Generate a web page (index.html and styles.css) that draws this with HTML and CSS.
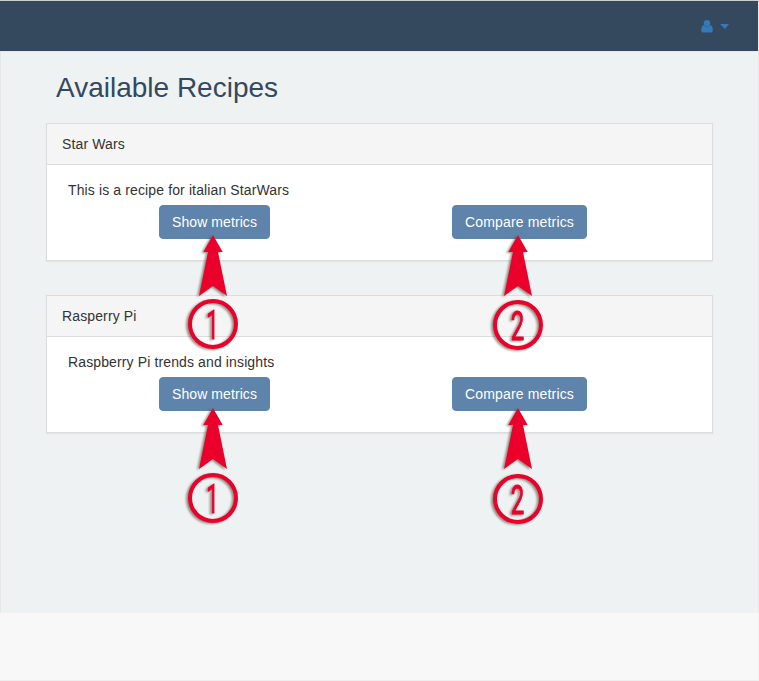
FILE: index.html
```html
<!DOCTYPE html>
<html lang="en">
<head>
<meta charset="utf-8">
<title>Available Recipes</title>
<link rel="stylesheet" href="styles.css">
</head>
<body>
<header class="navbar">
  <a class="user-menu">
    <svg width="12" height="13" viewBox="0 0 12 13"><circle cx="6" cy="3.300" r="3.200"/><path d="M2.600 5.100C.8 5.700.2 8 .2 10.200.2 11.700 1.100 12.500 2.500 12.500h7c1.400 0 2.300-.8 2.300-2.300 0-2.200-.6-4.500-2.400-5.100C7.600 7.200 4.400 7.200 2.600 5.100z"/></svg>
    <span class="caret"></span>
  </a>
</header>
<main class="content">
  <h1 class="title">Available Recipes</h1>
  <section class="panel">
    <div class="panel-heading">Star Wars</div>
    <div class="panel-body">
      <p class="description">This is a recipe for italian StarWars</p>
      <div class="actions">
        <div class="action"><button class="btn btn-show">Show metrics</button></div>
        <div class="action"><button class="btn btn-compare">Compare metrics</button></div>
      </div>
    </div>
  </section>
  <section class="panel">
    <div class="panel-heading">Rasperry Pi</div>
    <div class="panel-body">
      <p class="description">Raspberry Pi trends and insights</p>
      <div class="actions">
        <div class="action"><button class="btn btn-show">Show metrics</button></div>
        <div class="action"><button class="btn btn-compare">Compare metrics</button></div>
      </div>
    </div>
  </section>
</main>
<footer class="footer"></footer>
<svg class="callouts" width="759" height="681" viewBox="0 0 759 681">
  <defs>
    <path id="arrow" d="M0 0L9.700 17H5L14 61 0 51-14 61-5 17H-9.700z"/>
  </defs>
  <g class="callout">
    <use href="#arrow" x="213" y="235"/>
    <circle cx="213" cy="324" r="23"/>
    <text transform="translate(212.500 338.500) scale(.55 1)">1</text>
  </g>
  <g class="callout">
    <use href="#arrow" x="518" y="235"/>
    <circle cx="518" cy="325" r="23"/>
    <text transform="translate(517.500 339.500) scale(.6 1)">2</text>
  </g>
  <g class="callout">
    <use href="#arrow" x="213" y="408"/>
    <circle cx="213" cy="498" r="23"/>
    <text transform="translate(212.500 512.500) scale(.55 1)">1</text>
  </g>
  <g class="callout">
    <use href="#arrow" x="518" y="408"/>
    <circle cx="518" cy="499" r="23"/>
    <text transform="translate(517.500 513.500) scale(.6 1)">2</text>
  </g>
</svg>
</body>
</html>
```
FILE: styles.css
```css
* { box-sizing: border-box; }
body {
  margin: 0;
  height: 681px;
  overflow: hidden;
  position: relative;
  display: flex;
  flex-direction: column;
  background: #f8f8f8;
  color: #333;
  font: 14px/20px "Liberation Sans", Arial, sans-serif;
  letter-spacing: .125px;
}
.navbar {
  height: 51px;
  flex: none;
  display: flex;
  justify-content: flex-end;
  align-items: center;
  padding-right: 29px;
  border-top: 1px solid #ccd0cc;
  border-right: 1px solid #e7e7e7;
  background: #34495e;
}
.user-menu { display: flex; align-items: center; gap: 7px; }
.user-menu svg { display: block; fill: #337ab7; }
.caret {
  border-top: 5px solid #337ab7;
  border-left: 4.5px solid transparent;
  border-right: 4.5px solid transparent;
  border-left-width: 5px;
}
.content {
  height: 562px;
  flex: none;
  padding: 20px 45px 0;
  background: #eef2f3;
  border: 1px solid #e7e7e7;
  border-bottom: 0;
}
.title {
  margin: 0 0 20px 10px;
  font-size: 28px;
  line-height: 31px;
  font-weight: 400;
  letter-spacing: 0;
  color: #34495e;
}
.panel {
  width: 667px;
  height: 138px;
  margin-bottom: 34px;
  border: 1px solid #ddd;
  background: #fff;
  box-shadow: 0 1px 1px rgba(0, 0, 0, .05);
}
.panel-heading {
  height: 41px;
  padding: 10px 15px;
  border-bottom: 1px solid #ddd;
  background: #f5f5f5;
}
.panel-body { padding: 15px 21px; }
.description { margin: 0 0 5px; }
.actions { display: grid; grid-template-columns: 293px 315px; }
.action { display: flex; padding-left: 91px; }
.btn {
  height: 34px;
  padding: 6px 0 6px 12px;
  border: 1px solid #5e84ab;
  border-radius: 4px;
  background: #5e84ab;
  color: #fff;
  font: inherit;
  text-align: left;
  white-space: nowrap;
}
.btn-show { width: 111px; letter-spacing: .08px; }
.btn-compare { width: 135px; letter-spacing: .16px; }
.footer { flex: 1; border-right: 1px solid #f3f3f3; border-bottom: 1px solid #eee; }
.callouts { position: absolute; left: 0; top: 0; pointer-events: none; }
.callout { fill: #ea002a; filter: drop-shadow(-1.5px 1.5px 1px rgba(65, 60, 35, .55)); }
.callout circle { fill: none; stroke: #ea002a; stroke-width: 4; }
.callout text {
  font: 40px Roboto, "Liberation Sans", sans-serif;
  letter-spacing: 0;
  text-anchor: middle;
  stroke: #ea002a;
  stroke-width: 1;
}
```
